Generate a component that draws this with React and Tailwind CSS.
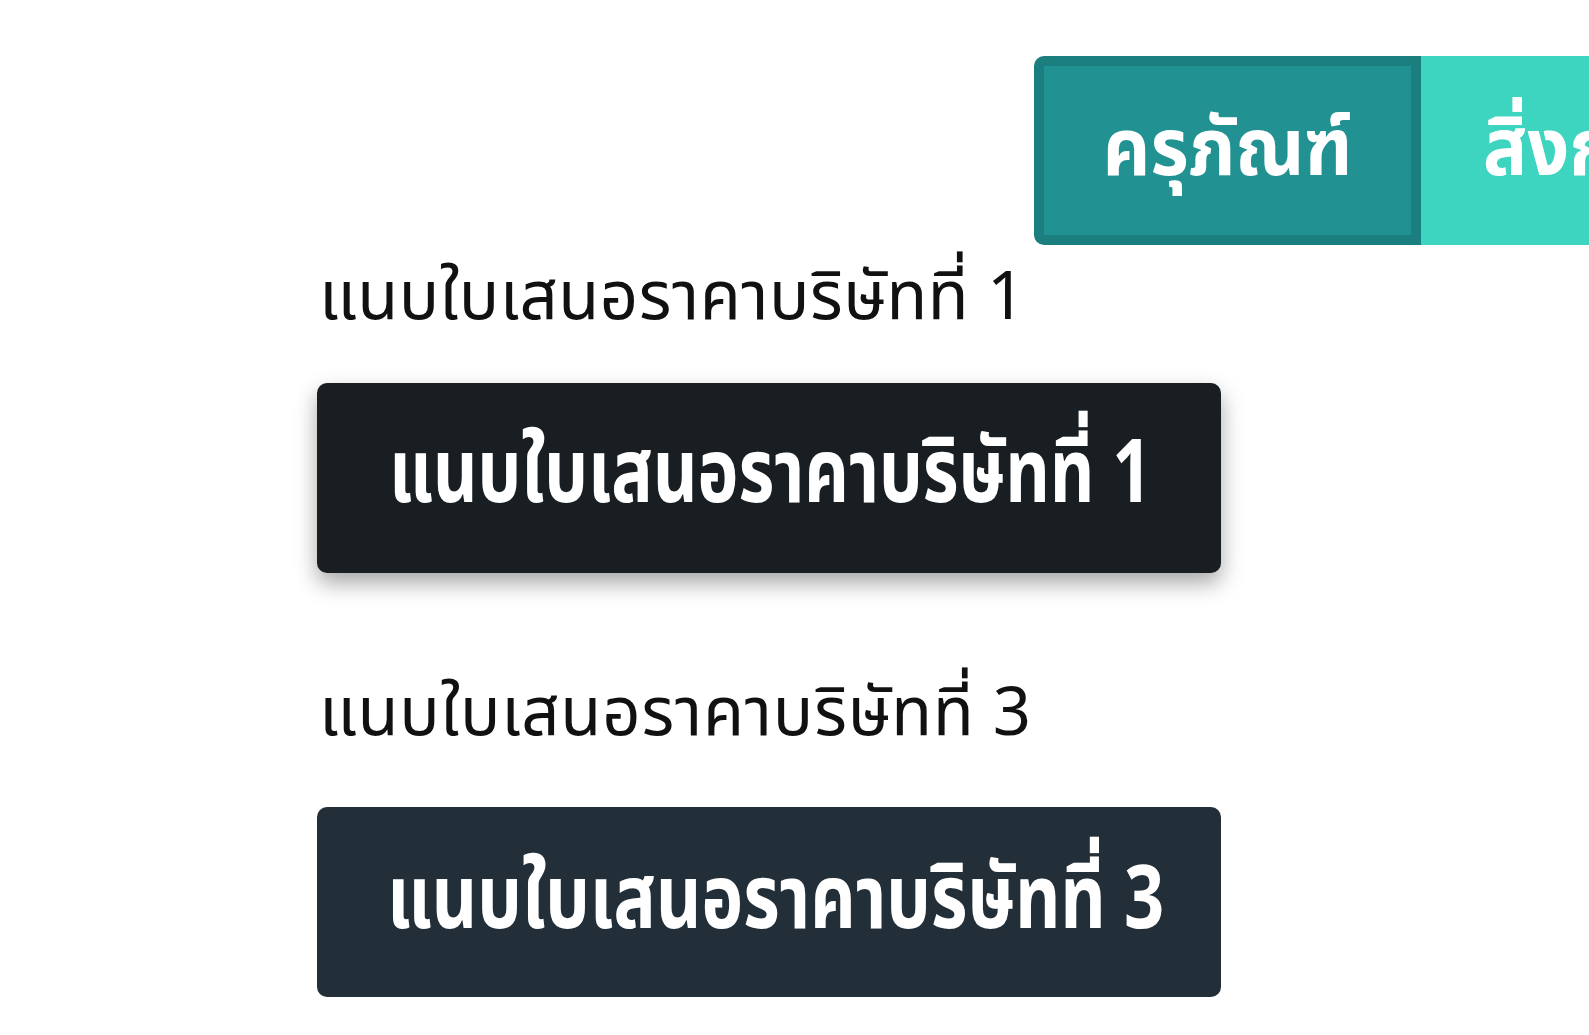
export default function App() {
  const thai = { fontFamily: '"Noto Sans Thai", "Noto Sans Thai Looped", "Noto Sans", "Liberation Sans", sans-serif' };
  return (
    <div className="w-[1589px] h-[1035px] bg-white overflow-hidden relative" style={thai}>
      <div className="flex justify-end pt-[56px] pl-[1034px]">
        <div className="flex w-full h-[189px]">
          <div className="w-[387px] shrink-0 rounded-l-[10px] bg-[#219192] border-[10px] border-[#1b7f80] flex items-center justify-center text-white font-bold text-[80px]">
            <span className="inline-block scale-x-[0.92]">ครุภัณฑ์</span>
          </div>
          <div className="flex-1 bg-[#3dd4c0] flex items-center pl-[62px] text-white font-bold text-[80px] whitespace-nowrap overflow-hidden">
            <span className="inline-block scale-x-[0.92] origin-left">สิ่งก่อสร้าง</span>
          </div>
        </div>
      </div>
      <div className="pl-[317px] flex flex-col items-start">
        <div className="mt-[14px] pl-[2px] text-[67px] leading-[80px] tracking-[0.5px] text-[#111] whitespace-nowrap">
          แนบใบเสนอราคาบริษัทที่ 1
        </div>
        <div className="mt-[44px] w-[904px] h-[190px] rounded-[10px] bg-[#181e22] shadow-[0_10px_22px_rgba(0,0,0,0.35)] flex items-center pl-[72px] pb-[4px] text-white font-bold text-[88px] whitespace-nowrap overflow-hidden">
          <span className="inline-block scale-x-[0.785] origin-left">แนบใบเสนอราคาบริษัทที่ 1</span>
        </div>
        <div className="mt-[102px] pl-[2px] text-[67px] leading-[80px] tracking-[0.8px] text-[#111] whitespace-nowrap">
          แนบใบเสนอราคาบริษัทที่ 3
        </div>
        <div className="mt-[52px] w-[904px] h-[190px] rounded-[10px] bg-[#232f38] flex items-center pl-[70px] text-white font-bold text-[88px] whitespace-nowrap overflow-hidden">
          <span className="inline-block scale-x-[0.8] origin-left">แนบใบเสนอราคาบริษัทที่ 3</span>
        </div>
      </div>
    </div>
  );
}
